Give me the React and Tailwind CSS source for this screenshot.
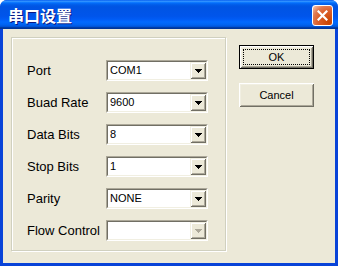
import React from "react";

function Arrow({ color }) {
  return (
    <svg width="7" height="4" viewBox="0 0 7 4" shapeRendering="crispEdges">
      <rect x="0" y="0" width="7" height="1" fill={color} />
      <rect x="1" y="1" width="5" height="1" fill={color} />
      <rect x="2" y="2" width="3" height="1" fill={color} />
      <rect x="3" y="3" width="1" height="1" fill={color} />
    </svg>
  );
}

function Combo({ value, disabled }) {
  return (
    <div className="w-[102px] h-[21px] border border-t-[#aca899] border-l-[#aca899] border-r-white border-b-white">
      <div className="h-full border border-t-[#716f64] border-l-[#716f64] border-r-[#f1efe2] border-b-[#f1efe2] bg-white flex">
        <div className="flex-1 pl-[2px] flex items-center text-[11px] leading-none text-black font-['Liberation_Sans',Arial,sans-serif]">
          {value}
        </div>
        <div className="w-[16px] bg-[#ece9d8] shadow-[inset_1px_1px_#f1efe2,inset_-1px_-1px_#716f64,inset_2px_2px_#fff,inset_-2px_-2px_#aca899] flex items-center justify-center">
          <Arrow color={disabled ? "#aca899" : "#000"} />
        </div>
      </div>
    </div>
  );
}

function Row({ label, value, disabled }) {
  return (
    <div className="flex items-center h-[21px]">
      <div className="w-[79px] text-[13px] leading-none text-black font-['Liberation_Sans',Arial,sans-serif]">
        {label}
      </div>
      <Combo value={value} disabled={disabled} />
    </div>
  );
}

function Btn({ children, isDefault }) {
  return (
    <div
      className={
        "relative w-[75px] h-[24px] bg-[#ece9d8] flex items-center justify-center text-[11px] leading-none text-black font-['Liberation_Sans',Arial,sans-serif] " +
        (isDefault
          ? "border border-black shadow-[inset_1px_1px_#fff,inset_-1px_-1px_#716f64,inset_2px_2px_#f1efe2,inset_-2px_-2px_#aca899]"
          : "shadow-[inset_1px_1px_#fff,inset_-1px_-1px_#716f64,inset_2px_2px_#f1efe2,inset_-2px_-2px_#aca899]")
      }
    >
      {isDefault && (
        <div className="absolute inset-[3px] border border-dotted border-black" />
      )}
      <span className="relative">{children}</span>
    </div>
  );
}

export default function App() {
  return (
    <div className="w-[338px] h-[266px] bg-white">
      <div className="w-full h-full flex flex-col rounded-t-[7px] overflow-hidden bg-[#0843d8]">
        <div className="h-[29px] shrink-0 flex items-center justify-between pl-[8px] pr-[5px] bg-[linear-gradient(to_bottom,#0058ee_0%,#3593ff_4%,#288eff_6%,#127dff_8%,#036ffc_10%,#0262ee_14%,#0057e5_20%,#0054e3_24%,#0055eb_56%,#005bf5_66%,#026afe_76%,#0062ef_86%,#0052d6_92%,#0040ab_94%,#003092_100%)]">
          <span className="text-[16px] leading-none font-bold text-white font-['Noto_Sans_CJK_SC',sans-serif] [text-shadow:1px_1px_#0a1883] pt-[1px]">
            串口设置
          </span>
          <div className="w-[21px] h-[21px] mt-[2px] rounded-[3px] border border-white bg-[radial-gradient(circle_at_85%_85%,#c84300_0%,#dc5f2a_50%,#e07a52_72%,#f2b396_92%,#fff_100%)] flex items-center justify-center">
            <svg width="11" height="11" viewBox="0 0 11 11">
              <path d="M1.5 1.5L9.5 9.5M9.5 1.5L1.5 9.5" stroke="#fff" strokeWidth="2.2" strokeLinecap="square" />
            </svg>
          </div>
        </div>
        <div className="flex-1 mx-[3px] mb-[3px] bg-[#ece9d8] flex items-start">
          <div className="ml-[8px] mt-[8px] w-[215px] h-[214px] border border-[#d0d0bf] shadow-[inset_1px_1px_#fff,1px_1px_#fff] pl-[15px] pt-[22px] flex flex-col gap-[11px]">
            <Row label="Port" value="COM1" />
            <Row label="Buad Rate" value="9600" />
            <Row label="Data Bits" value="8" />
            <Row label="Stop Bits" value="1" />
            <Row label="Parity" value="NONE" />
            <Row label="Flow Control" value="" disabled />
          </div>
          <div className="ml-[13px] mt-[16px] flex flex-col gap-[14px]">
            <Btn isDefault>OK</Btn>
            <Btn>Cancel</Btn>
          </div>
        </div>
      </div>
    </div>
  );
}
